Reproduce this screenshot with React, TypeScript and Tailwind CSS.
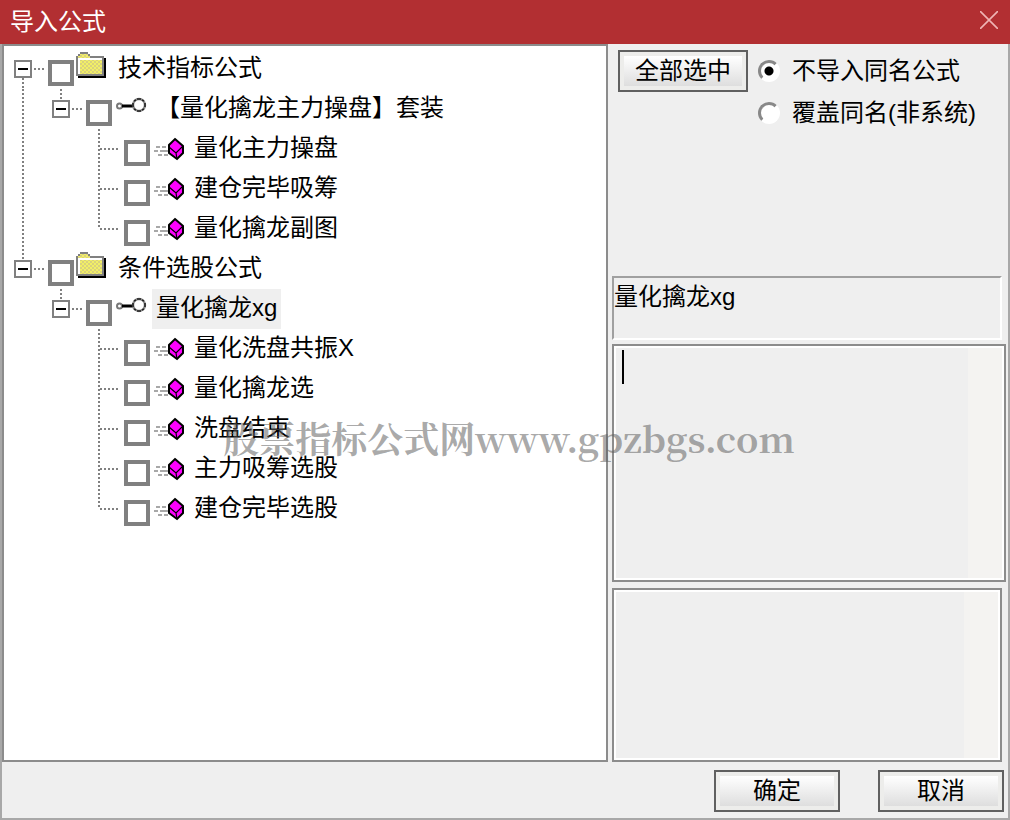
import React, { useState } from 'react';

type NodeKind = 'folder' | 'key' | 'formula';

interface FormulaNode {
  id: string;
  name: string;
  kind: NodeKind;
  children?: FormulaNode[];
}

const formulas: FormulaNode[] = [
  {
    id: 'tech',
    name: '技术指标公式',
    kind: 'folder',
    children: [
      {
        id: 'tech-suite',
        name: '【量化擒龙主力操盘】套装',
        kind: 'key',
        children: [
          { id: 'tech-1', name: '量化主力操盘', kind: 'formula' },
          { id: 'tech-2', name: '建仓完毕吸筹', kind: 'formula' },
          { id: 'tech-3', name: '量化擒龙副图', kind: 'formula' },
        ],
      },
    ],
  },
  {
    id: 'cond',
    name: '条件选股公式',
    kind: 'folder',
    children: [
      {
        id: 'cond-xg',
        name: '量化擒龙xg',
        kind: 'key',
        children: [
          { id: 'cond-1', name: '量化洗盘共振X', kind: 'formula' },
          { id: 'cond-2', name: '量化擒龙选', kind: 'formula' },
          { id: 'cond-3', name: '洗盘结束', kind: 'formula' },
          { id: 'cond-4', name: '主力吸筹选股', kind: 'formula' },
          { id: 'cond-5', name: '建仓完毕选股', kind: 'formula' },
        ],
      },
    ],
  },
];

const FolderIcon: React.FC = () => (
  <svg viewBox="0 0 40 40" className="w-10 h-10 shrink-0" shapeRendering="crispEdges" aria-hidden="true">
    <defs>
      <pattern id="folder-dots" width="4" height="4" patternUnits="userSpaceOnUse">
        <rect width="4" height="4" fill="#f2ef66" />
        <rect width="2" height="2" fill="#d9d27c" />
        <rect x="2" y="2" width="2" height="2" fill="#d9d27c" />
      </pattern>
    </defs>
    <path d="M4 27h26V9h2v20H4z" fill="#000" />
    <path d="M6 3h8v2h2v2h14v20H2V7h2V5h2z" fill="#808080" />
    <path d="M6 5h8v2h2v2h12v16H4V7h2z" fill="url(#folder-dots)" />
    <path d="M4 9h24v2H6v14H4z" fill="#fff" />
  </svg>
);

const KeyIcon: React.FC = () => (
  <svg viewBox="0 0 40 40" className="w-10 h-10 shrink-0" fill="none" aria-hidden="true">
    <circle cx="7.5" cy="17" r="2.5" stroke="#777" strokeWidth="2" />
    <path d="M10 17h11" stroke="#000" strokeWidth="3" />
    <circle cx="27" cy="16" r="6" stroke="#8a8a8a" strokeWidth="2.4" />
    <path
      d="M25 10h4M25 22h4M21 14v4M33 14v4M22 12l2-1M30 11l2 1M22 20l2 1M30 21l2-1"
      stroke="#222"
      strokeWidth="1.6"
    />
  </svg>
);

const FormulaIcon: React.FC = () => (
  <svg viewBox="0 0 40 40" className="w-10 h-10 shrink-0" aria-hidden="true">
    <path d="M6 18h4m2 0h4M4 22h4m2 0h8M8 26h4m2 0h4" stroke="#8c8c8c" strokeWidth="1.6" fill="none" />
    <path d="M25 10l8 7v7l-6 6-8-6v-8z" fill="#f0f" stroke="#000" strokeWidth="2" />
    <path d="M19 18l7 6 7-7M26 24l1 6" fill="none" stroke="#000" strokeWidth="1.2" />
  </svg>
);

const icons: Record<NodeKind, React.FC> = {
  folder: FolderIcon,
  key: KeyIcon,
  formula: FormulaIcon,
};

const DOTS_Y = 'w-0.5 bg-[repeating-linear-gradient(to_bottom,#808080_0_2px,transparent_2px_4px)]';
const DOTS_X = 'h-0.5 bg-[repeating-linear-gradient(to_right,#808080_0_2px,transparent_2px_4px)]';

interface TreeItemProps {
  node: FormulaNode;
  // one entry per ancestor: does its line run on below this row
  lines: boolean[];
  isFirst: boolean;
  isLast: boolean;
  selected: string;
  onSelect: (node: FormulaNode) => void;
}

const TreeItem: React.FC<TreeItemProps> = ({ node, lines, isFirst, isLast, selected, onSelect }) => {
  const [open, setOpen] = useState(true);
  const Icon = icons[node.kind];
  const isRoot = lines.length === 0;

  return (
    <li>
      <div className="flex h-10 items-center">
        {lines.map((line, index) => (
          <span key={index} className="flex h-10 w-[38px] shrink-0 justify-center">
            {line && <span className={DOTS_Y} />}
          </span>
        ))}
        <span className="flex h-10 w-10 shrink-0 items-center">
          <span className="flex h-10 w-[38px] shrink-0 flex-col items-center">
            <span className={`flex-1 ${isRoot && isFirst ? '' : DOTS_Y}`} />
            {node.children && (
              <button
                type="button"
                aria-label={open ? '折叠' : '展开'}
                onClick={() => setOpen(!open)}
                className="flex size-[18px] shrink-0 items-center justify-center border-2 border-[#808080] bg-white"
              >
                <span className="h-0.5 w-2.5 bg-black" />
              </button>
            )}
            <span className={`flex-1 ${isLast ? '' : DOTS_Y}`} />
          </span>
          <span className={`shrink-0 ${DOTS_X} ${node.children ? '-ml-2 w-2.5' : '-ml-[18px] w-5'}`} />
        </span>
        <input
          type="checkbox"
          id={node.id}
          className="mt-2 ml-1 size-[26px] shrink-0 appearance-none border-4 border-[#808080] bg-white checked:bg-black"
        />
        <Icon />
        <label
          htmlFor={node.id}
          onClick={() => onSelect(node)}
          className={`h-10 px-1 leading-[38px] whitespace-nowrap ${selected === node.id ? 'bg-[#efefef]' : ''}`}
        >
          {node.name}
        </label>
      </div>
      {node.children && open && (
        <ul>
          {node.children.map((child, index) => (
            <TreeItem
              key={child.id}
              node={child}
              lines={[...lines, !isLast]}
              isFirst={index === 0}
              isLast={index === node.children!.length - 1}
              selected={selected}
              onSelect={onSelect}
            />
          ))}
        </ul>
      )}
    </li>
  );
};

const DialogButton: React.FC<{ label: string; className: string }> = ({ label, className }) => (
  <button type="button" className={`h-[42px] border-2 border-[#606060] bg-[#ededeb] p-1 ${className}`}>
    <span className="flex h-full items-center justify-center bg-linear-to-b from-white to-[#dedede]">{label}</span>
  </button>
);

const ImportMode: React.FC<{ id: string; label: string; defaultChecked?: boolean }> = ({ id, label, defaultChecked }) => (
  <div className="flex h-[42px] items-center gap-3">
    <input
      type="radio"
      name="import-mode"
      id={id}
      defaultChecked={defaultChecked}
      className="size-[22px] shrink-0 appearance-none rounded-full border-3 border-[#888] border-r-white border-b-white bg-white checked:bg-[radial-gradient(circle,#000_4px,transparent_5px)]"
    />
    <label htmlFor={id} className="whitespace-nowrap">{label}</label>
  </div>
);

export default function App() {
  const [selected, setSelected] = useState<FormulaNode>(formulas[1].children![0]);

  return (
    <div className="relative flex min-h-screen flex-col bg-[#efefef] font-['Liberation_Sans','Noto_Sans_CJK_SC',sans-serif] text-2xl text-black">
      <header className="flex h-11 shrink-0 items-center justify-between bg-[#b22f32] pr-3 pl-2.5 text-white">
        <h1>导入公式</h1>
        <button type="button" aria-label="关闭" className="mb-1">
          <svg viewBox="0 0 18 18" className="size-[18px]" fill="none" stroke="#efb4b4" strokeWidth="1.6" aria-hidden="true">
            <path d="M0 0l18 18M18 0L0 18" />
          </svg>
        </button>
      </header>

      <div className="flex flex-1 flex-col border-2 border-t-0 border-[#a8a8a8]">
        <main className="grid flex-1 grid-cols-[606fr_400fr]">
          <ul className="border-2 border-[#8c8c8c] bg-white pt-[3px]">
            {formulas.map((node, index) => (
              <TreeItem
                key={node.id}
                node={node}
                lines={[]}
                isFirst={index === 0}
                isLast={index === formulas.length - 1}
                selected={selected.id}
                onSelect={setSelected}
              />
            ))}
          </ul>

          <section className="flex flex-col pl-1">
            <div className="flex h-[232px] gap-2.5 pt-1.5 pl-1.5">
              <DialogButton label="全部选中" className="w-[130px] shrink-0" />
              <div>
                <ImportMode id="mode-skip" label="不导入同名公式" defaultChecked />
                <ImportMode id="mode-cover" label="覆盖同名(非系统)" />
              </div>
            </div>

            <p className="mr-1.5 h-16 border-2 border-[#a0a0a0] border-r-white border-b-white leading-[38px]">{selected.name}</p>

            <div className="relative mt-1 mr-0.5 flex flex-1 border-2 border-[#8c8c8c] bg-white p-0.5">
              <textarea
                aria-label="公式说明"
                className="w-full resize-none border-r-[34px] border-[#f4f3f1] bg-[#efefef] px-1.5 outline-none"
              />
              <span className="absolute top-1 left-2 h-[34px] w-0.5 bg-black" />
            </div>

            <div className="mt-1.5 mr-1.5 flex h-[174px] border-2 border-[#8c8c8c] bg-white p-0.5">
              <textarea
                aria-label="备注"
                className="w-full resize-none border-r-[34px] border-[#f4f3f1] bg-[#efefef] px-1.5 outline-none"
              />
            </div>
          </section>
        </main>

        <footer className="flex justify-end gap-[38px] pt-2 pr-1 pb-1.5">
          <DialogButton label="确定" className="w-[126px]" />
          <DialogButton label="取消" className="w-[126px]" />
        </footer>
      </div>

      <p className="pointer-events-none absolute inset-x-0 top-[410px] pl-2 text-center font-['Noto_Serif_CJK_SC','Liberation_Serif','Noto_Sans_CJK_SC',serif] text-4xl leading-[56px] font-bold whitespace-nowrap text-[#606060]/55">
        股票指标公式网www.gpzbgs.com
      </p>
    </div>
  );
}
